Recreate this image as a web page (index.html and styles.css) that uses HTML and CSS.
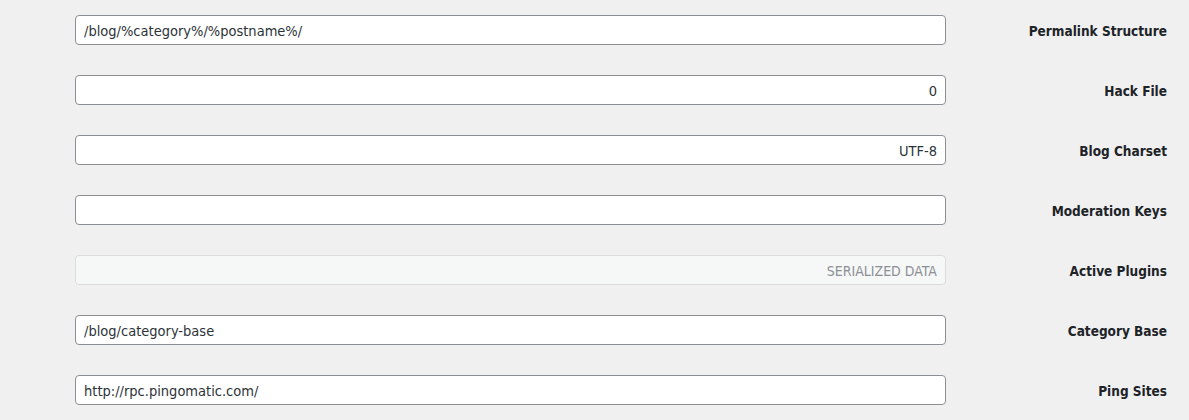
FILE: index.html
```html
<!DOCTYPE html>
<html lang="en" dir="rtl">
<head>
    <meta charset="UTF-8">
    <title>Options</title>
    <link rel="stylesheet" href="styles.css">
</head>
<body>
    <div class="form-table">
        <div class="row">
            <label class="label" for="permalink_structure">Permalink Structure</label>
            <input type="text" id="permalink_structure" class="field ltr" value="/blog/%category%/%postname%/">
        </div>
        <div class="row">
            <label class="label" for="hack_file">Hack File</label>
            <input type="text" id="hack_file" class="field" value="0">
        </div>
        <div class="row">
            <label class="label" for="blog_charset">Blog Charset</label>
            <input type="text" id="blog_charset" class="field" value="UTF-8">
        </div>
        <div class="row">
            <label class="label" for="moderation_keys">Moderation Keys</label>
            <input type="text" id="moderation_keys" class="field" value="">
        </div>
        <div class="row">
            <label class="label" for="active_plugins">Active Plugins</label>
            <input type="text" id="active_plugins" class="field disabled" value="SERIALIZED DATA" disabled>
        </div>
        <div class="row">
            <label class="label" for="category_base">Category Base</label>
            <input type="text" id="category_base" class="field ltr" value="/blog/category-base">
        </div>
        <div class="row">
            <label class="label" for="ping_sites">Ping Sites</label>
            <input type="text" id="ping_sites" class="field ltr" value="http://rpc.pingomatic.com/">
        </div>
    </div>
</body>
</html>
```

FILE: styles.css
```css
body {
    margin: 0;
    background-color: #f0f0f1;
    color: #1d2327;
    font-family: "DejaVu Sans", sans-serif;
    font-stretch: condensed;
    font-size: 13px;
}

.form-table {
    padding: 0 22px 0 75px;
}

.row {
    display: grid;
    grid-template-columns: 1fr 871px;
    align-items: center;
    padding: 15px 0;
}

.label {
    padding-top: 2px;
    font-weight: bold;
    font-size: 13.5px;
    text-align: right;
}

.field {
    box-sizing: border-box;
    width: 871px;
    height: 30px;
    padding: 1px 8px 0;
    border: 1px solid #8c8f94;
    border-radius: 4px;
    background-color: #fff;
    color: #2c3338;
    font-family: inherit;
    font-stretch: condensed;
    font-size: 14.5px;
    text-align: right;
    direction: rtl;
}

.field.ltr {
    direction: ltr;
    text-align: left;
}

.field.disabled {
    background-color: #f6f7f7;
    border-color: #dcdcde;
    color: #8c8f94;
    font-size: 14px;
}
```
